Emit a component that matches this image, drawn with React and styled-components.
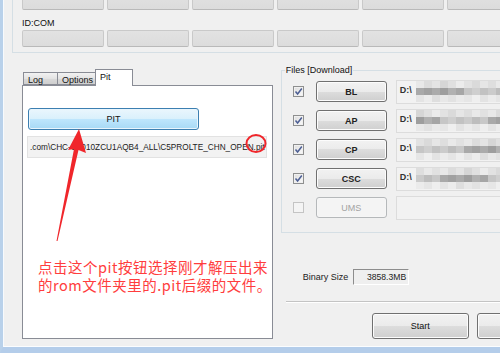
import React from "react";
import styled, { createGlobalStyle } from "styled-components";

const Global = createGlobalStyle`
  html, body { margin: 0; padding: 0; width: 500px; height: 353px; overflow: hidden; background: #f0f0f0; }
  * { box-sizing: border-box; }
`;

const Window = styled.div`
  position: relative;
  width: 500px;
  height: 353px;
  overflow: hidden;
  background: #f0f0f0;
  border-left: 3px solid #b9d1ea;
  border-bottom: 6px solid #b4cdea;
  font-family: "Liberation Sans", Arial, sans-serif;
  font-size: 9px;
  color: #1a1a1a;
  display: flex;
  flex-direction: column;
`;

const Client = styled.div`
  flex: 1;
  border-left: 1px solid #f7fafd;
  border-bottom: 1px solid #fbfdff;
  padding-left: 8px;
  display: flex;
  flex-direction: column;
`;

const TopGroup = styled.div`
  margin-top: -9px;
  border: 1px solid #d5dfe5;
  border-top: none;
  border-right: none;
  padding: 0 0 5px 9px;
  display: flex;
  flex-direction: column;
`;

const BoxRow = styled.div`
  display: flex;
  gap: 3px;
  height: ${(p) => p.$h}px;
  margin-top: ${(p) => p.$mt || 0}px;
`;

const PortBox = styled.div`
  flex: 0 0 82px;
  height: 100%;
  background: linear-gradient(#e2e2e2, #dcdcdc);
  border: 1px solid #c9c9c9;
  border-bottom-color: #b9b9b9;
  border-radius: 2px;
`;

const PortLabel = styled.div`
  margin-top: 8px;
  height: 10px;
  line-height: 10px;
  font-size: 9px;
  color: #111;
`;

const Main = styled.div`
  display: flex;
  padding-left: 10px;
`;

const LeftCol = styled.div`
  width: 253px;
  margin-top: 16px;
  display: flex;
  flex-direction: column;
`;

const TabStrip = styled.div`
  display: flex;
  align-items: flex-end;
  height: 16px;
  padding-left: 1px;
  position: relative;
  z-index: 1;
`;

const Tab = styled.div`
  width: ${(p) => p.$w}px;
  height: ${(p) => (p.$active ? 17 : 13)}px;
  margin-bottom: ${(p) => (p.$active ? -1 : 0)}px;
  border: 1px solid #898c95;
  border-bottom: ${(p) => (p.$active ? "none" : "1px solid #898c95")};
  margin-left: ${(p) => (p.$first ? 0 : -1)}px;
  background: ${(p) => (p.$active ? "#ffffff" : "linear-gradient(#f2f2f2, #e3e3e3 50%, #dadada 50%, #cfcfcf)")};
  padding: 2px 0 0 4px;
  font-size: 9px;
  line-height: 10px;
  color: #111;
`;

const Panel = styled.div`
  height: 254px;
  background: #ffffff;
  border: 1px solid #898c95;
  padding: 22px 0 0 4px;
  display: flex;
  flex-direction: column;
`;

const PitButton = styled.div`
  margin-left: 1px;
  width: 171px;
  height: 22px;
  border: 1px solid #3c7fb1;
  border-radius: 3px;
  box-shadow: inset 0 0 0 1px #e8f5fd;
  background: linear-gradient(#eaf6fd, #d9f0fc 50%, #bee6fd 50%, #a7d9f5);
  display: flex;
  align-items: center;
  justify-content: center;
  font-size: 9px;
  color: #111;
`;

const PathBox = styled.div`
  margin-top: 6px;
  width: 240px;
  height: 22px;
  background: #f2f2f2;
  border: 1px solid #e2e2e2;
  padding-left: 2px;
  display: flex;
  align-items: center;
  font-size: 8.25px;
  white-space: nowrap;
  overflow: hidden;
  color: #222;
`;

const Note = styled.div`
  margin: 100px 0 0 11px;
  font-family: "Noto Sans CJK SC", "Noto Sans", sans-serif;
  font-size: 14.5px;
  color: #ff3d3d;
  letter-spacing: 0.5px;
  white-space: nowrap;
`;

const NoteLine = styled.div`
  height: 18px;
  line-height: 18px;
`;

const RightCol = styled.div`
  flex: 1;
  margin-left: 8px;
  display: flex;
  flex-direction: column;
`;

const FilesGroup = styled.fieldset`
  margin: 12px 0 0 0;
  padding: 1px 0 10px 11px;
  border: 1px solid #d5dfe5;
  border-right: none;
  min-width: 0;
`;

const Legend = styled.legend`
  padding: 0 1px;
  margin-left: -8px;
  font-size: 9px;
  line-height: 11px;
  color: #111;
`;

const FileRow = styled.div`
  display: flex;
  align-items: center;
  height: 29px;
`;

const Check = styled.div`
  width: 11px;
  height: 11px;
  border: 1px solid ${(p) => (p.$disabled ? "#c4c4c4" : "#8e8f8f")};
  background: ${(p) => (p.$disabled ? "#f4f4f4" : "linear-gradient(135deg, #dcdcdc, #fbfbfb)")};
  box-shadow: inset 0 0 0 1px ${(p) => (p.$disabled ? "#f4f4f4" : "#f0f0f0")};
  display: flex;
  align-items: center;
  justify-content: center;
`;

const FileButton = styled.div`
  margin-left: 12px;
  width: 71px;
  height: 21px;
  border: 1px solid ${(p) => (p.$disabled ? "#b5b8ba" : "#707070")};
  border-radius: 3px;
  box-shadow: inset 0 0 0 1px ${(p) => (p.$disabled ? "#f6f6f6" : "#fcfcfc")};
  background: ${(p) =>
    p.$disabled
      ? "#f4f4f4"
      : "linear-gradient(#f2f2f2, #ebebeb 50%, #dddddd 50%, #cfcfcf)"};
  display: flex;
  align-items: center;
  justify-content: center;
  font-size: 9px;
  font-weight: ${(p) => (p.$disabled ? "normal" : "bold")};
  color: ${(p) => (p.$disabled ? "#a3a3a3" : "#222")};
`;

const FileField = styled.div`
  margin-left: 9px;
  flex: 1;
  height: 24px;
  background: #f2f2f2;
  border: 1px solid #dcdcdc;
  border-right: none;
  display: flex;
  align-items: flex-start;
  padding: 4px 0 0 3px;
  font-size: 9px;
  font-weight: bold;
  color: #333;
  overflow: hidden;
`;

const Mosaic = styled.div`
  display: grid;
  grid-template-columns: repeat(12, 8px);
  grid-auto-rows: 7px;
  margin: -4px 0 0 4px;
`;

const Pix = styled.div`
  background: ${(p) => p.$c};
`;

const SizeRow = styled.div`
  margin: 36px 0 0 22px;
  display: flex;
  align-items: center;
  height: 16px;
`;

const SizeLabel = styled.span`
  font-size: 9px;
  color: #222;
`;

const SizeBox = styled.div`
  margin-left: 5px;
  width: 56px;
  height: 16px;
  border: 1px solid;
  border-color: #8d8d8d #ffffff #ffffff #8d8d8d;
  background: #efefef;
  display: flex;
  align-items: center;
  justify-content: flex-end;
  padding-right: 2px;
  font-size: 8.6px;
  color: #222;
`;

const Separator = styled.div`
  margin: 16px 0 0 5px;
  height: 2px;
  border-top: 1px solid #c4c4c4;
  border-bottom: 1px solid #ffffff;
`;

const ActionRow = styled.div`
  margin-top: 10px;
  padding-left: 91px;
  display: flex;
  gap: 8px;
`;

const ActionButton = styled.div`
  flex: 0 0 97px;
  height: 26px;
  border: 1px solid #707070;
  border-radius: 3px;
  box-shadow: inset 0 0 0 1px #fcfcfc;
  background: linear-gradient(#f2f2f2, #ebebeb 50%, #dddddd 50%, #cfcfcf);
  display: flex;
  align-items: center;
  justify-content: center;
  font-size: 9px;
  color: #111;
`;

const Overlay = styled.svg`
  position: absolute;
  left: -3px;
  top: 0;
  width: 500px;
  height: 353px;
  pointer-events: none;
`;

const CheckMark = () => (
  <svg width="9" height="9" viewBox="0 0 9 9">
    <path d="M1.5 4.5 L3.6 7 L7.8 1.5" fill="none" stroke="#4d5f94" strokeWidth="1.5" />
  </svg>
);

const palettes = [
  ["#e8e8e8", "#dcdcdc", "#e4e4e4", "#d6d6d6", "#e0e0e0", "#ececec", "#e2e2e2", "#dadada", "#e6e6e6", "#dedede", "#e9e9e9", "#e1e1e1"],
  ["#a9a9a9", "#a1a1a1", "#ababab", "#9e9e9e", "#b1b1b1", "#a6a6a6", "#c6c6c6", "#cfcfcf", "#c2c2c2", "#cbcbcb", "#bdbdbd", "#c8c8c8"],
  ["#e4e4e4", "#ececec", "#dedede", "#e8e8e8", "#e2e2e2", "#eaeaea", "#e6e6e6", "#efefef", "#e3e3e3", "#ebebeb", "#e5e5e5", "#eeeeee"],
];

function MosaicBlock({ seed }) {
  const cells = [];
  for (let r = 0; r < 3; r++) {
    for (let c = 0; c < 12; c++) {
      const row = palettes[r];
      cells.push(<Pix key={`${r}-${c}`} $c={row[(c + seed * 3) % row.length]} />);
    }
  }
  return <Mosaic>{cells}</Mosaic>;
}

const files = [
  { name: "BL", on: true },
  { name: "AP", on: true },
  { name: "CP", on: true },
  { name: "CSC", on: true },
  { name: "UMS", on: false },
];

export default function App() {
  return (
    <>
      <Global />
      <Window>
        <Client>
          <TopGroup>
            <BoxRow $h={19}>
              {Array.from({ length: 6 }).map((_, i) => (
                <PortBox key={i} />
              ))}
            </BoxRow>
            <PortLabel>ID:COM</PortLabel>
            <BoxRow $h={17} $mt={2}>
              {Array.from({ length: 6 }).map((_, i) => (
                <PortBox key={i} />
              ))}
            </BoxRow>
          </TopGroup>
          <Main>
            <LeftCol>
              <TabStrip>
                <Tab $w={35} $first>Log</Tab>
                <Tab $w={39}>Options</Tab>
                <Tab $w={38} $active>Pit</Tab>
              </TabStrip>
              <Panel>
                <PitButton>PIT</PitButton>
                <PathBox>.com\CHC-C5010ZCU1AQB4_ALL\C5PROLTE_CHN_OPEN.pit</PathBox>
                <Note>
                  <NoteLine>点击这个pit按钮选择刚才解压出来</NoteLine>
                  <NoteLine>的rom文件夹里的.pit后缀的文件。</NoteLine>
                </Note>
              </Panel>
            </LeftCol>
            <RightCol>
              <FilesGroup>
                <Legend>Files [Download]</Legend>
                {files.map((f, i) => (
                  <FileRow key={f.name}>
                    <Check $disabled={!f.on}>{f.on && <CheckMark />}</Check>
                    <FileButton $disabled={!f.on}>{f.name}</FileButton>
                    <FileField>
                      {f.on && (
                        <>
                          <span>D:\</span>
                          <MosaicBlock seed={i} />
                        </>
                      )}
                    </FileField>
                  </FileRow>
                ))}
              </FilesGroup>
              <SizeRow>
                <SizeLabel>Binary Size</SizeLabel>
                <SizeBox>3858.3MB</SizeBox>
              </SizeRow>
              <Separator />
              <ActionRow>
                <ActionButton>Start</ActionButton>
                <ActionButton />
              </ActionRow>
            </RightCol>
          </Main>
        </Client>
        <Overlay viewBox="0 0 500 353">
          <ellipse cx="256" cy="143.5" rx="9.5" ry="8.5" fill="none" stroke="#f0262b" strokeWidth="2" />
          <polygon
            points="79,129 86,153 78.5,150 57.5,241 56.5,241 74,149 68,150"
            fill="#f0262b"
          />
        </Overlay>
      </Window>
    </>
  );
}
